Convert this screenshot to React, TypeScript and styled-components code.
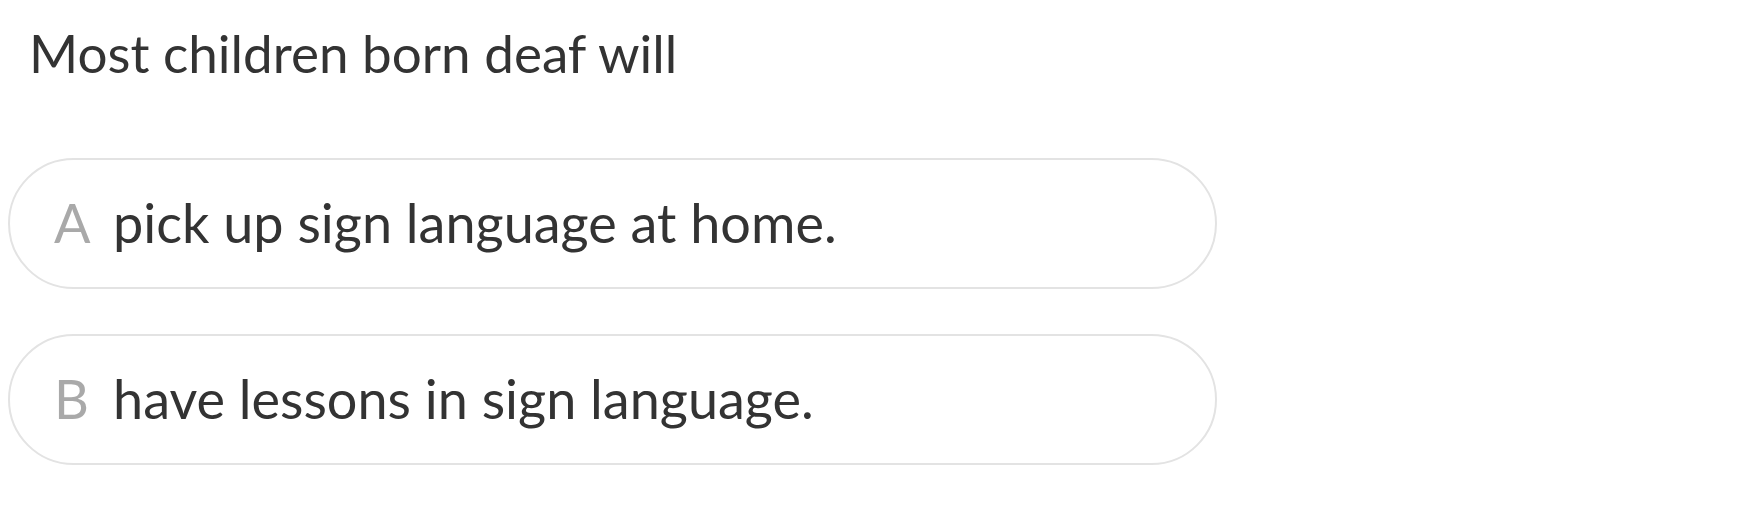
import React from "react";
import styled, { createGlobalStyle } from "styled-components";

const GlobalStyle = createGlobalStyle`
  html, body {
    margin: 0;
    padding: 0;
    background: #ffffff;
  }
  body {
    font-family: "Lato", "Liberation Sans", sans-serif;
    color: #333333;
  }
`;

const Page = styled.div`
  width: 1741px;
  padding: 21px 0 0 8px;
  box-sizing: border-box;
`;

const Question = styled.div`
  font-size: 53px;
  line-height: 1.2;
  color: #333333;
  padding-left: 21px;
  margin-bottom: 73px;
`;

const Options = styled.div`
  display: flex;
  flex-direction: column;
  gap: 45px;
  width: 1209px;
`;

const Option = styled.div`
  display: flex;
  align-items: center;
  height: 131px;
  box-sizing: border-box;
  border: 2px solid #e3e3e3;
  border-radius: 66px;
  padding-left: 44px;
  font-size: 54px;
  line-height: 1.2;
  cursor: pointer;
`;

const Letter = styled.span`
  display: inline-block;
  width: 59px;
  flex-shrink: 0;
  color: #a9a9a9;
`;

const Text = styled.span`
  color: #333333;
`;

const options = [
  { key: "A", text: "pick up sign language at home." },
  { key: "B", text: "have lessons in sign language." },
];

export default function App() {
  return (
    <>
      <GlobalStyle />
      <Page>
        <Question>Most children born deaf will</Question>
        <Options>
          {options.map((o) => (
            <Option key={o.key}>
              <Letter>{o.key}</Letter>
              <Text>{o.text}</Text>
            </Option>
          ))}
        </Options>
      </Page>
    </>
  );
}
